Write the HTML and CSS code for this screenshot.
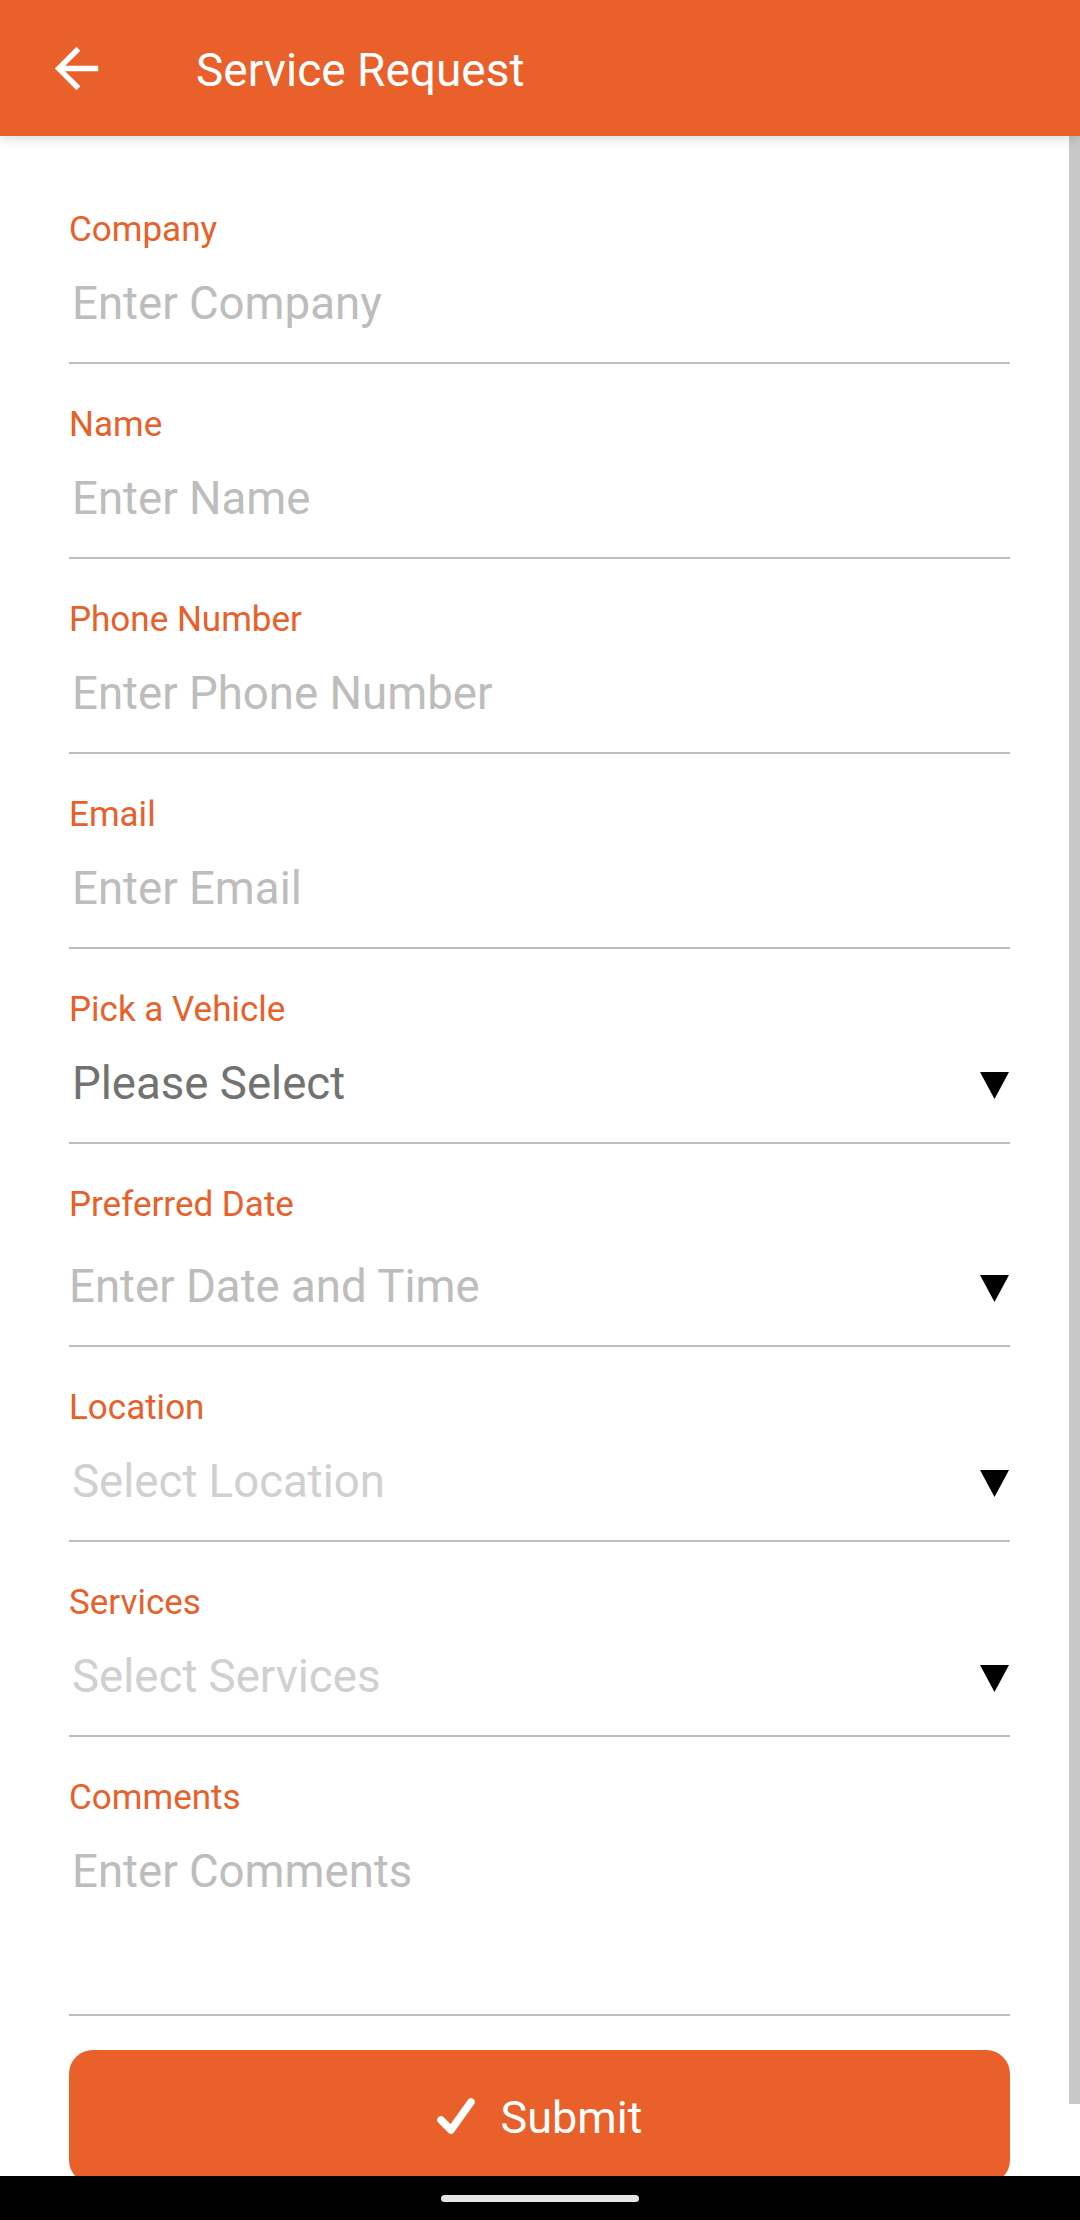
FILE: index.html
```html
<!DOCTYPE html>
<html lang="en">
<head>
  <meta charset="UTF-8">
  <meta name="viewport" content="width=device-width, initial-scale=1.0">
  <title>Service Request</title>
  <link rel="stylesheet" href="styles.css">
</head>
<body>
  <div id="app">
    <!-- top bar -->
    <header class="toolbar">
      <button class="back-button" title="Back">
        <svg viewBox="0 0 24 24" width="65" height="65">
          <path d="M20 11H7.83l5.59-5.59L12 4l-8 8 8 8 1.41-1.41L7.83 13H20v-2z" fill="#FFFFFF"></path>
        </svg>
      </button>
      <h1 class="toolbar-title">Service Request</h1>
    </header>

    <!-- form -->
    <main class="form">
      <div class="field">
        <label class="field-label">Company</label>
        <div class="field-input"><span class="placeholder">Enter Company</span></div>
      </div>

      <div class="field">
        <label class="field-label">Name</label>
        <div class="field-input"><span class="placeholder">Enter Name</span></div>
      </div>

      <div class="field">
        <label class="field-label">Phone Number</label>
        <div class="field-input"><span class="placeholder">Enter Phone Number</span></div>
      </div>

      <div class="field">
        <label class="field-label">Email</label>
        <div class="field-input"><span class="placeholder">Enter Email</span></div>
      </div>

      <div class="field">
        <label class="field-label">Pick a Vehicle</label>
        <div class="field-input">
          <span class="value">Please Select</span>
          <svg class="caret" viewBox="0 0 29 27" width="29" height="27"><polygon points="0,0 29,0 14.5,27" fill="#000"></polygon></svg>
        </div>
      </div>

      <div class="field">
        <label class="field-label">Preferred Date</label>
        <div class="field-input date">
          <span class="placeholder">Enter Date and Time</span>
          <svg class="caret" viewBox="0 0 29 27" width="29" height="27"><polygon points="0,0 29,0 14.5,27" fill="#000"></polygon></svg>
        </div>
      </div>

      <div class="field">
        <label class="field-label">Location</label>
        <div class="field-input">
          <span class="placeholder light">Select Location</span>
          <svg class="caret" viewBox="0 0 29 27" width="29" height="27"><polygon points="0,0 29,0 14.5,27" fill="#000"></polygon></svg>
        </div>
      </div>

      <div class="field">
        <label class="field-label">Services</label>
        <div class="field-input">
          <span class="placeholder light">Select Services</span>
          <svg class="caret" viewBox="0 0 29 27" width="29" height="27"><polygon points="0,0 29,0 14.5,27" fill="#000"></polygon></svg>
        </div>
      </div>

      <div class="field">
        <label class="field-label">Comments</label>
        <div class="field-input multi"><span class="placeholder">Enter Comments</span></div>
      </div>

      <button class="submit-button">
        <svg viewBox="0 0 38 38" width="38" height="38">
          <polyline points="4,22 14,32 34,4" fill="none" stroke="#FFFFFF" stroke-width="7.5" stroke-linecap="round" stroke-linejoin="round"></polyline>
        </svg>
        <span>Submit</span>
      </button>
    </main>

    <!-- scroll indicator -->
    <div class="scroll-thumb"></div>

    <!-- system nav -->
    <div class="nav-bar"><div class="nav-pill"></div></div>
  </div>
</body>
</html>
```

FILE: styles.css
```css
/* base */
body {
  margin: 0;
  font-family: Roboto, 'Noto Sans', sans-serif;
  background: #FFFFFF;
  width: 1080px;
  height: 2220px;
  overflow: hidden;
}

#app {
  position: relative;
  height: 2220px;
}

/* top bar */
.toolbar {
  position: relative;
  z-index: 2;
  display: flex;
  align-items: center;
  height: 136px;
  background: #E9602A;
  box-shadow: 0 4px 10px rgba(0, 0, 0, 0.12);
}

.back-button {
  display: flex;
  margin-left: 44px;
  padding: 0;
  border: none;
  background: none;
  cursor: pointer;
}

.toolbar-title {
  margin: 0 0 0 87px;
  padding-top: 4px;
  font-size: 46px;
  font-weight: 400;
  color: #FFFFFF;
}

/* form */
.form {
  padding: 33px 70px 0 69px;
}

.field {
  padding-top: 41px;
  border-bottom: 2px solid #BDBDBD;
}

.field-label {
  display: block;
  font-size: 35px;
  line-height: 40px;
  color: #E8602A;
}

.field-input {
  display: flex;
  justify-content: space-between;
  align-items: center;
  height: 52px;
  margin: 28px 0 32px;
  padding-left: 3px;
  font-size: 45.6px;
  line-height: 52px;
}

.field-input.date {
  margin-top: 36px;
  padding-left: 0;
}

.field-input.multi {
  align-items: flex-start;
  height: 136px;
}

.placeholder {
  color: #BDBDBD;
}

.placeholder.light {
  color: #D0D0D0;
}

.value {
  color: #727272;
}

.caret {
  margin: 3px 1px 0 0;
}

/* submit */
.submit-button {
  display: flex;
  justify-content: center;
  align-items: center;
  gap: 26px;
  width: 100%;
  height: 134px;
  margin-top: 34px;
  border: none;
  border-radius: 24px;
  background: #E9602A;
  color: #FFFFFF;
  font-family: Roboto, sans-serif;
  font-size: 45px;
  cursor: pointer;
}

/* scroll indicator */
.scroll-thumb {
  position: absolute;
  top: 136px;
  right: 0;
  width: 11px;
  height: 1968px;
  background: #C8C8C8;
}

/* system navigation */
.nav-bar {
  position: absolute;
  left: 0;
  bottom: 0;
  z-index: 3;
  display: flex;
  justify-content: center;
  align-items: center;
  width: 100%;
  height: 44px;
  background: #000000;
}

.nav-pill {
  width: 198px;
  height: 7px;
  border-radius: 4px;
  background: #E4E4E4;
}
```
